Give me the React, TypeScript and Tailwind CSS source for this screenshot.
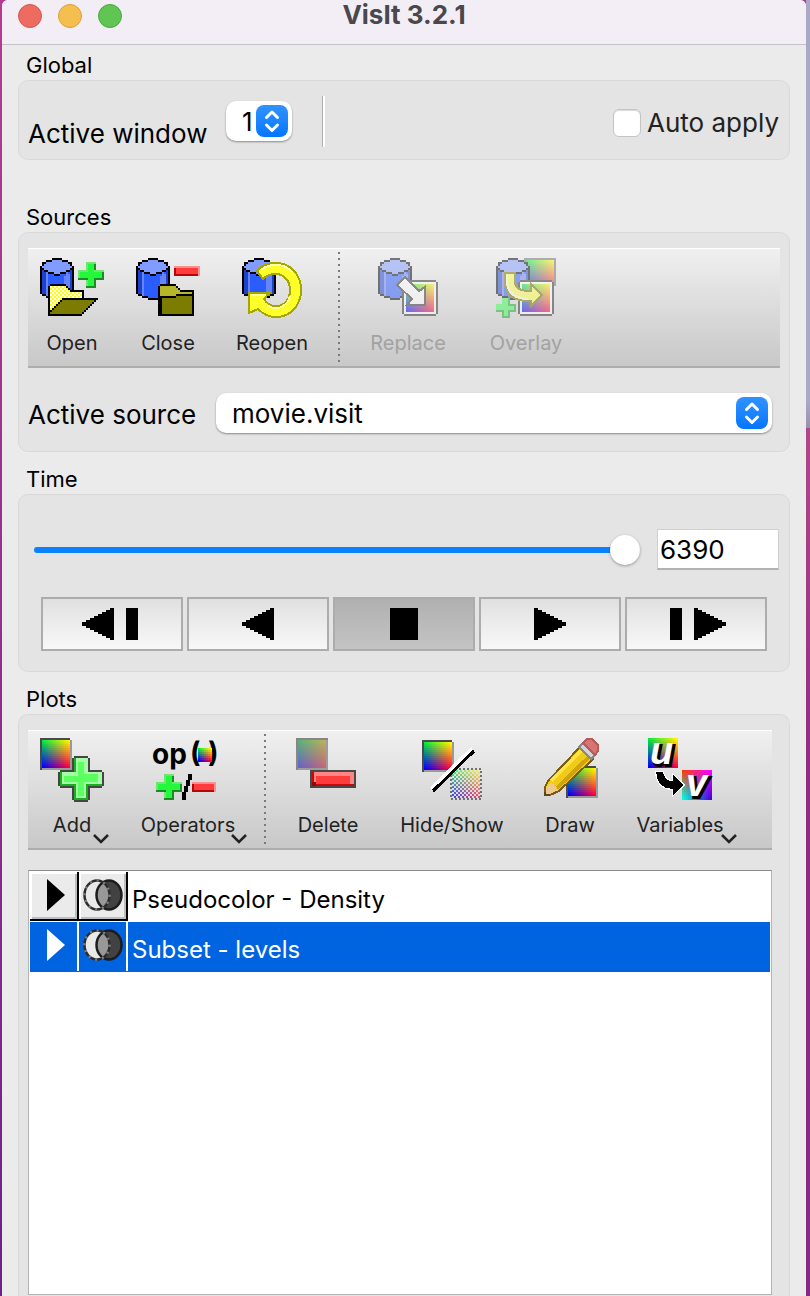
import React, { useState } from "react";
import type { ReactNode } from "react";

type RGB = [number, number, number];

const PALETTE: Record<string, string> = {
  K: "#000000",
  L: "#809cff",
  B: "#2a5cff",
  C: "#6684fb",
  D: "#1c42cc",
  O: "#7c7c00",
  T: "#b6b62a",
};

const CYLINDER = [
  "......KKKKK......",
  "...KKKLLLLLKKK...",
  ".KKLLLLLLLLLLLKK.",
  ".KLLLLLLLLLLLLLK.",
  "KLLLLLLLLLLLLLLLK",
  "KKLLLLLLLLLLLLLKK",
  "KDKKLLLLLLLLLKKDK",
  "KDDCKKKLLLKKKCBDK",
  "KDDCBBBKKKBBBCCDK",
  "KDDCBBBBBBBBCCCDK",
  "KDDCBBBBBBBBCCCDK",
  "KDDCBBBBBBBBCCCDK",
  "KDDCBBBBBBBBCCCDK",
  "KDDCBBBBBBBBCCCDK",
  "KDDCBBBBBBBBCCCDK",
  "KDDCBBBBBBBBCCCDK",
  "KDDCBBBBBBBBCCCDK",
  "KDDCBBBBBBBBCCCDK",
  ".KKCBBBBBBBBCCKK.",
  "...KKKBBBBBKKK...",
  "......KKKKK......",
];

const OPEN_FOLDER = [
  ".KKKKKKKK................",
  "KYYYYYYYYK...............",
  "KYYYYYYYYYK..............",
  "KYYYYYYYYYYKKKKKKK.......",
  "KYYYYYYYYYYYYYYYYK.......",
  "KYYYYYYYYYYYYYYYYK.......",
  "KYYYYYYYYYYYYYYYYK.......",
  "KYYYYYYKKKKKKKKKKKKKKKKKK",
  "KYYYYYKOOOOOOOOOOOOOOOOK.",
  "KYYYYKOOOOOOOOOOOOOOOOK..",
  "KYYYKOOOOOOOOOOOOOOOOK...",
  "KYYKOOOOOOOOOOOOOOOOK....",
  "KYKOOOOOOOOOOOOOOOOK.....",
  "KKOOOOOOOOOOOOOOOOK......",
  "KOOOOOOOOOOOOOOOOK.......",
  "KKKKKKKKKKKKKKKKK........",
];

const CLOSED_FOLDER = [
  ".KKKKKKKK.........",
  "KTTTTTTTTK........",
  "KTTTTTTTTTK.......",
  "KTTTTTTTTTTKKKKKKK",
  "KTTTTTTTTTTTTTTTTK",
  "KTTTTTTTTKKKKKKKKK",
  "KKKKKKKKKOOOOOOOOK",
  "KKOOOOOOOOOOOOOOOK",
  "KKOOOOOOOOOOOOOOOK",
  "KKOOOOOOOOOOOOOOOK",
  "KKOOOOOOOOOOOOOOOK",
  "KKOOOOOOOOOOOOOOOK",
  "KKOOOOOOOOOOOOOOOK",
  "KKOOOOOOOOOOOOOOOK",
  "KKOOOOOOOOOOOOOOOK",
  "KKKKKKKKKKKKKKKKKK",
];

/* Draws a sprite one cell at a time; Y cells are dithered yellow and white. */
function Sprite({ rows, x, y }: { rows: string[]; x: number; y: number }) {
  const cells: ReactNode[] = [];
  rows.forEach((row, j) => {
    row.split("").forEach((c, i) => {
      if (c === ".") return;
      const fill = c === "Y" ? ((i + j) % 2 ? "#ffff00" : "#ffffff") : PALETTE[c];
      cells.push(<rect key={`${i}-${j}`} x={x + i} y={y + j} width={1} height={1} fill={fill} />);
    });
  });
  return <g>{cells}</g>;
}

const SPECTRUM: RGB[] = [[0, 235, 60], [255, 245, 0], [0, 0, 255], [255, 0, 60]];
const MUTED: RGB[] = [[90, 178, 118], [182, 178, 92], [100, 100, 200], [196, 104, 116]];
const VIVID: RGB[] = [[255, 60, 0], [255, 0, 255], [0, 255, 220], [70, 0, 220]];

/* A square whose colour is blended between its four corners. */
function Swatch({ x, y, n, corners = SPECTRUM, dither = false }: { x: number; y: number; n: number; corners?: RGB[]; dither?: boolean }) {
  const cells: ReactNode[] = [];
  for (let j = 0; j < n; j++) {
    for (let i = 0; i < n; i++) {
      if (dither && (i + j) % 2) continue;
      const u = i / (n - 1);
      const v = j / (n - 1);
      const [a, b, c, d] = corners;
      const rgb = [0, 1, 2].map((k) =>
        Math.round((a[k] * (1 - u) + b[k] * u) * (1 - v) + (c[k] * (1 - u) + d[k] * u) * v)
      );
      cells.push(<rect key={`${i}-${j}`} x={x + i} y={y + j} width={1} height={1} fill={`rgb(${rgb.join(",")})`} />);
    }
  }
  return <g>{cells}</g>;
}

function FramedSwatch({ x, y }: { x: number; y: number }) {
  return (
    <g>
      <rect x={x + 1} y={y + 1} width={15} height={15} fill="#999999" />
      <path d={`M${x} ${y}h15v1h-14v15h-1z`} fill="#4a4a4a" />
      <Swatch x={x + 1} y={y + 1} n={14} />
    </g>
  );
}

function SmallPlus({ x, y }: { x: number; y: number }) {
  return (
    <g transform={`translate(${x} ${y})`}>
      <path d="M4 0h5v4h4v5h-4v4h-5v-4h-4v-5h4z" fill="#72e472" />
      <path d="M5 1h3v4h4v3h-4v4h-3v-4h-4v-3h4z" fill="#22f83c" />
      <path d="M8 1h1v3h-1zM12 5h1v4h-4v4h-5v-1h4v-4h4zM0 8h5v1h-5z" fill="#1e8a24" />
    </g>
  );
}

function SmallMinus({ x, y, w }: { x: number; y: number; w: number }) {
  return (
    <g transform={`translate(${x} ${y})`}>
      <rect width={w} height={5} fill="#ff9090" />
      <rect y={1} width={w - 1} height={4} fill="#b40808" />
      <rect x={1} y={1} width={w - 2} height={3} fill="#ff3c3c" />
    </g>
  );
}

function Art({ children, faded = false }: { children: ReactNode; faded?: boolean }) {
  return (
    <svg
      viewBox="0 0 32 32"
      shapeRendering="crispEdges"
      aria-hidden="true"
      className={faded ? "size-16 shrink-0 overflow-visible opacity-50" : "size-16 shrink-0 overflow-visible"}
    >
      {children}
    </svg>
  );
}

const OpenArt = () => (
  <Art>
    <Sprite rows={CYLINDER} x={0} y={1} />
    <Sprite rows={OPEN_FOLDER} x={4} y={14} />
    <SmallPlus x={19} y={3} />
  </Art>
);

const CloseArt = () => (
  <Art>
    <Sprite rows={CYLINDER} x={0} y={1} />
    <Sprite rows={CLOSED_FOLDER} x={11} y={14} />
    <SmallMinus x={19} y={5} w={13} />
  </Art>
);

const ReopenArt = () => (
  <Art>
    <Sprite rows={CYLINDER} x={1} y={1} />
    <path
      d="M8.500 7.500C11 4.500 14 3.500 18 3.500C25.500 3.500 30.500 9.500 30.500 17C30.500 25 25 30.500 18 30.500C14 30.500 11.500 29 9 26.500L4.500 28.500V18.500H14.500L12 21.500C13.500 24 15.500 25 18 25C22.500 25 25 21.500 25 17C25 12.500 22 9 18 9C15.500 9 13.500 9.500 11.500 11.500Z"
      fill="#ffff2a"
      stroke="#a6a600"
      strokeWidth={1}
    />
    <path d="M11 6.500C13 5 15 4.500 18 4.500C21 4.500 24 5.500 26 8" fill="none" stroke="#ffffa8" strokeWidth={1} />
    <path d="M14 25C18 28 24 25 25 20M5.500 19.500H13" fill="none" stroke="#ffff9c" strokeWidth={1} />
  </Art>
);

const ReplaceArt = () => (
  <Art faded>
    <Sprite rows={CYLINDER} x={1} y={1} />
    <path d="M14 12h16v1h1v16h-1v1h-16v-1h-1v-16h1z" fill="#303030" />
    <rect x={14} y={13} width={16} height={16} fill="#ffffff" />
    <Swatch x={15} y={14} n={14} />
    <path d="M14.500 10.500L21.500 17.500L24.500 15.500V24.500H15.500L18 21.500L10.500 14.500Z" fill="#ffffff" stroke="#303030" />
  </Art>
);

const OverlayArt = () => (
  <Art faded>
    <rect x={15} y={1} width={16} height={14} fill="#707070" />
    <Swatch x={16} y={2} n={14} />
    <Sprite rows={CYLINDER} x={1} y={1} />
    <path d="M13 12h16v1h1v16h-1v1h-16v-1h-1v-16h1z" fill="#303030" />
    <rect x={13} y={13} width={16} height={16} fill="#ffffff" />
    <Swatch x={14} y={14} n={14} />
    <path
      d="M5.500 8.500H10.500V13C10.500 15.500 12.500 17.500 18.500 17.500V14L24 19.500L18.500 25V22.500C10 23 5.500 19 5.500 13Z"
      fill="#ffff50"
      stroke="#707000"
    />
    <path d="M6.500 9.500V13C6.500 17.500 10 21 17 21.500" fill="none" stroke="#ffffd8" />
    <path d="M4 21h4v3h3v4h-3v3h-4v-3h-3v-4h3z" fill="#20a830" />
    <path d="M4 21h3v4h3v2h-3v3h-2v-3h-4v-3h3z" fill="#40ff58" />
  </Art>
);

const AddArt = () => (
  <Art>
    <FramedSwatch x={0} y={0} />
    <g transform="translate(9 9)">
      <path d="M8 0h7v1h1v6h6v1h1v7h-1v1h-6v6h-1v1h-7v-1h-1v-6h-6v-1h-1v-7h1v-1h6v-6h1z" fill="#454545" />
      <path d="M8 1h7v7h7v7h-7v7h-7v-7h-7v-7h7z" fill="#18b01c" />
      <path d="M9 1h6v7h7v6h-8v7h-5v-7h-7v-6h7z" fill="#a6fba6" />
      <path d="M10 3h3v6h7v4h-7v7h-3v-7h-7v-3h7z" fill="#5cff60" />
    </g>
  </Art>
);

const OperatorsArt = () => (
  <Art>
    <g fontFamily="Inter, 'Liberation Sans', sans-serif" fontWeight={700} fontSize={14} fill="#000000">
      <text x={-2} y={13}>op</text>
      <text x={17} y={12}>(</text>
      <text x={26} y={12}>)</text>
    </g>
    <Swatch x={21} y={5} n={7} />
    <SmallPlus x={0} y={18} />
    <path d="M16 18h2v3h-1v3h-1v3h-1v4h-2v-4h1v-3h1v-3h1z" fill="#000000" />
    <SmallMinus x={18} y={22} w={12} />
  </Art>
);

const DeleteArt = () => (
  <Art>
    <rect width={16} height={16} fill="#9c9c9c" />
    <path d="M0 0h16v1h-15v15h-1z" fill="#868686" />
    <Swatch x={1} y={1} n={14} corners={MUTED} />
    <rect x={7} y={16} width={23} height={9} fill="#484848" />
    <rect x={8} y={17} width={21} height={7} fill="#c80808" />
    <rect x={9} y={17} width={20} height={6} fill="#ff8484" />
    <rect x={10} y={19} width={17} height={4} fill="#ff3c3c" />
    <rect x={8} y={22} width={2} height={2} fill="#a00000" />
  </Art>
);

const HideShowArt = () => (
  <Art>
    <FramedSwatch x={1} y={1} />
    <g opacity={0.7}>
      <Swatch x={16} y={16} n={14} dither />
    </g>
    <rect x={15.500} y={15.500} width={15} height={15} fill="none" stroke="#707070" strokeDasharray="1 1" />
    <path d="M5.500 25.500L26 5.500" stroke="#ffffff" strokeWidth={2} />
    <path d="M6.500 26.500L27 6.500" stroke="#000000" strokeWidth={1.500} />
  </Art>
);

const DrawArt = () => (
  <Art>
    <FramedSwatch x={14} y={14} />
    <path d="M3.500 28.500V24.500L5 21.500L21 4.500L27.500 10.500L10.500 26.500L6 28.500Z" fill="#f0cc18" stroke="#7c5c10" />
    <path d="M6.500 21.500L22 6" stroke="#ffe448" strokeWidth={2} />
    <path d="M9.500 25L25.500 9.500" stroke="#d0a410" strokeWidth={2} />
    <path d="M4 24.500L6 22.500L8 23L8.500 25L10 26L6 28H4Z" fill="#efc890" />
    <path d="M3 27h1v1h2v1h-3z" fill="#5c4420" />
    <path d="M20.500 4.500L22.500 2.500L28.500 8.500L26.500 10.500Z" fill="#d4d4d4" stroke="#888888" />
    <path d="M22.500 2.500L24.500 .500H27L30 3.500V6.500L28.500 8.500Z" fill="#d87474" stroke="#b85a5a" />
  </Art>
);

const VariablesArt = () => (
  <Art>
    <Swatch x={0} y={0} n={15} />
    <Swatch x={17} y={16} n={15} corners={VIVID} />
    <g fontFamily="'Liberation Sans', sans-serif" fontWeight={700} fontStyle="italic" fontSize={19}>
      <text x={2} y={14} fill="#000000" stroke="#000000" strokeWidth={1}>u</text>
      <text x={1} y={13} fill="#ffffff">u</text>
      <text x={20} y={30} fill="#000000" stroke="#000000" strokeWidth={1}>v</text>
      <text x={19} y={29} fill="#ffffff">v</text>
    </g>
    <path
      d="M4 17H7.500C8 20 9.500 21.500 12.500 21.500V18.500L18 23.500L12.500 28.500V25.500C7.500 25.500 4.500 23 4 17Z"
      fill="#000000"
      stroke="#ffffff"
      strokeWidth={1}
      paintOrder="stroke"
    />
  </Art>
);

function ToolButton({ label, art, width, disabled = false, menu = false }: { label: string; art: ReactNode; width: string; disabled?: boolean; menu?: boolean }) {
  return (
    <button
      type="button"
      disabled={disabled}
      aria-haspopup={menu ? "menu" : undefined}
      className={`relative flex shrink-0 flex-col items-center gap-2 ${width}`}
    >
      {art}
      <span
        className={
          disabled
            ? "text-[20px] leading-[30px] whitespace-nowrap text-[#a2a2a2]"
            : "text-[20px] leading-[30px] whitespace-nowrap text-[#222222]"
        }
      >
        {label}
      </span>
      {menu && (
        <svg viewBox="0 0 18 11" aria-hidden="true" className="absolute right-0 -bottom-1 h-[11px] w-[18px]">
          <path d="M2 2l7 7 7-7" fill="none" stroke="#222222" strokeWidth={2.500} />
        </svg>
      )}
    </button>
  );
}

function ToolSeparator({ width }: { width: string }) {
  return (
    <div role="separator" className={`flex shrink-0 justify-center pb-[3px] ${width}`}>
      <div className="h-[110px] w-[2px] bg-[repeating-linear-gradient(#7a7a7a_0_2px,transparent_2px_6px)]" />
    </div>
  );
}

function Toolbar({ label, children }: { label: string; children: ReactNode }) {
  return (
    <div
      role="toolbar"
      aria-label={label}
      className="flex h-[120px] items-start border-t border-b-2 border-t-white border-b-[#adadad] bg-linear-to-b from-[#f0f0f0] to-[#c8c8c8]"
    >
      {children}
    </div>
  );
}

function Group({ title, className, panel, children }: { title: string; className: string; panel: string; children: ReactNode }) {
  return (
    <section className={className}>
      <h2 className="pl-2 text-[22px] leading-[30px] font-normal text-black">{title}</h2>
      <div className={`rounded-[10px] border border-[#d9d9d9] bg-[#e4e4e4] ${panel}`}>{children}</div>
    </section>
  );
}

function PopUp({ id, options, width }: { id: string; options: string[]; width: string }) {
  return (
    <div className={`relative ${width}`}>
      <select
        id={id}
        className="h-10 w-full appearance-none rounded-[10px] bg-white pt-[2px] pl-4 text-[26px] leading-[38px] text-black shadow-[0_1px_2px_rgba(0,0,0,0.4)] outline-none"
      >
        {options.map((o) => (
          <option key={o}>{o}</option>
        ))}
      </select>
      <span className="pointer-events-none absolute top-1 right-1 flex size-8 items-center justify-center rounded-lg bg-linear-to-b from-[#2f92ff] to-[#0076ff]">
        <svg viewBox="0 0 32 32" aria-hidden="true" className="size-8">
          <path d="M10.500 12.500L16 7l5.500 5.500M10.500 20L16 25.500l5.500-5.500" fill="none" stroke="#ffffff" strokeWidth={3} strokeLinecap="round" strokeLinejoin="round" />
        </svg>
      </span>
    </div>
  );
}

const LEFT_STEPS = "M32 0v32h-4v-2h-4v-2h-4v-2h-4v-2h-4v-2h-4v-2h-4v-2h-4v-4h4v-2h4v-2h4v-2h4v-2h4v-2h4v-2h4v-2z";
const RIGHT_STEPS = "M0 0v32h4v-2h4v-2h4v-2h4v-2h4v-2h4v-2h4v-2h4v-4h-4v-2h-4v-2h-4v-2h-4v-2h-4v-2h-4v-2h-4v-2z";

const TRANSPORT = [
  { label: "Step backward", d: LEFT_STEPS + "M44 0h12v32h-12z", box: "0 0 60 32", size: "h-8 w-[60px]" },
  { label: "Play backward", d: LEFT_STEPS, box: "0 0 32 32", size: "size-8" },
  { label: "Stop", d: "M2 0h28v32h-28z", box: "0 0 32 32", size: "size-8" },
  { label: "Play", d: RIGHT_STEPS, box: "0 0 32 32", size: "size-8" },
  { label: "Step forward", d: "M-24 0h12v32h-12z" + RIGHT_STEPS, box: "-28 0 60 32", size: "h-8 w-[60px]" },
];

function OverlapIcon() {
  return (
    <svg viewBox="0 0 40 32" aria-hidden="true" className="h-8 w-10 shrink-0">
      <ellipse cx="14" cy="16" rx="12.500" ry="14.500" fill="#e9e9e9" />
      <ellipse cx="26" cy="16" rx="12.500" ry="14.500" fill="#424242" />
      <path d="M20 3.200A12.500 14.500 0 0 1 20 28.800A12.500 14.500 0 0 1 20 3.200Z" fill="#989898" />
      <ellipse cx="26" cy="16" rx="12.500" ry="14.500" fill="none" stroke="#1c1c1c" strokeWidth={2.500} />
      <ellipse cx="14" cy="16" rx="12.500" ry="14.500" fill="none" stroke="#2c2c2c" strokeWidth={2.500} />
      <ellipse cx="14" cy="16" rx="12.500" ry="14.500" fill="none" stroke="#808080" strokeWidth={2.500} strokeDasharray="2 5" />
    </svg>
  );
}

function PlotRow({ name, selected, onSelect }: { name: string; selected: boolean; onSelect: () => void }) {
  const cell = selected
    ? "flex h-[49px] w-[49px] shrink-0 items-start justify-center border-r-2 border-white pt-[7px]"
    : "flex h-[49px] w-[49px] shrink-0 items-start justify-center border-r-2 border-b-2 border-black bg-[#ebebeb] pt-[7px] shadow-[inset_2px_2px_0_#ffffff,inset_-2px_-2px_0_#bdbdbd]";
  return (
    <li
      onClick={onSelect}
      className={selected ? "flex h-[50px] items-start bg-[#0064e1] text-white" : "flex h-[50px] items-start bg-white text-black"}
    >
      <button type="button" aria-label={`Expand ${name}`} className={cell}>
        <svg viewBox="0 0 18 32" aria-hidden="true" className="ml-[5px] h-8 w-[18px]">
          <path d="M0 0l18 16L0 32z" fill="currentColor" />
        </svg>
      </button>
      <button type="button" aria-label={`Selection for ${name}`} className={cell}>
        <OverlapIcon />
      </button>
      <span className="truncate pt-1 pl-1 text-[24px] leading-[48px]">{name}</span>
    </li>
  );
}

export default function App() {
  const [time, setTime] = useState("6390");
  const [selected, setSelected] = useState("Subset - levels");

  return (
    <div className="flex h-screen flex-col overflow-hidden bg-[linear-gradient(#a9a8c8_0_31%,#9a8fae_33%,#b0478c_33%,#8e2c80_60%,#842a86)] pr-1 font-[Inter,'Liberation_Sans',sans-serif]">
      <div className="flex min-h-0 flex-1 flex-col bg-linear-to-b from-[#b53c92] to-[#6e2086] pl-[2px]">
        <main className="flex min-h-0 flex-1 flex-col rounded-t-md bg-[#ebebeb]">
          <header className="relative flex h-[45px] shrink-0 items-start justify-center rounded-t-md border-b border-[#c4c2c8] bg-[#f3eef5]">
            <div className="absolute top-1 left-4 flex gap-4">
              <button type="button" aria-label="Close window" className="size-6 rounded-full border border-[#d5584e] bg-[#ed6b60]" />
              <button type="button" aria-label="Minimize window" className="size-6 rounded-full border border-[#d8a13c] bg-[#f5bf4f]" />
              <button type="button" aria-label="Zoom window" className="size-6 rounded-full border border-[#4ba73f] bg-[#61c554]" />
            </div>
            <h1 className="text-[26px] leading-[30px] font-bold text-[#4a484b]">VisIt 3.2.1</h1>
          </header>

          <div className="flex min-h-0 flex-1 flex-col px-4 pt-[5px]">
            <Group title="Global" className="shrink-0" panel="flex h-20 items-start pl-[9px] pr-[10px]">
              <label htmlFor="active-window" className="mt-[34px] w-[198px] shrink-0 text-[26px] leading-[38px] whitespace-nowrap text-black">
                Active window
              </label>
              <div className="mt-5">
                <PopUp id="active-window" options={["1"]} width="w-[66px]" />
              </div>
              <div className="mt-[15px] ml-[30px] h-[51px] w-[3px] border-l border-[#b0b0b0] bg-white" />
              <label className="mt-[23px] ml-auto flex items-center gap-[6px] text-[26px] leading-[38px] whitespace-nowrap text-[#222222]">
                <input type="checkbox" className="size-7 appearance-none rounded-md border border-[#c4c4c4] bg-white shadow-[inset_0_1px_1px_rgba(0,0,0,0.15)] checked:bg-[#0a7aff]" />
                Auto apply
              </label>
            </Group>

            <Group title="Sources" className="mt-[42px] shrink-0" panel="h-[220px] px-[9px] pt-[15px]">
              <Toolbar label="Sources">
                <div className="flex pt-[7px]">
                  <ToolButton label="Open" art={<OpenArt />} width="w-[88px]" />
                  <ToolButton label="Close" art={<CloseArt />} width="w-[104px]" />
                  <ToolButton label="Reopen" art={<ReopenArt />} width="w-[104px]" />
                </div>
                <div className="pt-[3px]">
                  <ToolSeparator width="w-[30px]" />
                </div>
                <div className="flex pt-[7px]">
                  <ToolButton label="Replace" art={<ReplaceArt />} width="w-[108px]" disabled />
                  <ToolButton label="Overlay" art={<OverlayArt />} width="w-[128px]" disabled />
                </div>
              </Toolbar>
              <div className="mt-[25px] flex items-center pr-2">
                <label htmlFor="active-source" className="w-[188px] shrink-0 pt-1 text-[26px] leading-9 whitespace-nowrap text-black">
                  Active source
                </label>
                <PopUp id="active-source" options={["movie.visit"]} width="min-w-0 flex-1" />
              </div>
            </Group>

            <Group title="Time" className="mt-3 shrink-0" panel="h-[178px] pt-[34px]">
              <div className="flex items-center pr-[10px] pl-[15px]">
                <input
                  type="range"
                  aria-label="Time"
                  min={0}
                  max={6390}
                  value={Number(time) || 0}
                  onChange={(e) => setTime(e.target.value)}
                  className="h-[30px] min-w-0 flex-1 appearance-none bg-transparent [&::-webkit-slider-runnable-track]:h-[6px] [&::-webkit-slider-runnable-track]:rounded-full [&::-webkit-slider-runnable-track]:bg-[#0a82ff] [&::-webkit-slider-thumb]:-mt-3 [&::-webkit-slider-thumb]:size-[30px] [&::-webkit-slider-thumb]:appearance-none [&::-webkit-slider-thumb]:rounded-full [&::-webkit-slider-thumb]:bg-white [&::-webkit-slider-thumb]:shadow-[0_1px_3px_rgba(0,0,0,0.35)]"
                />
                <input
                  type="text"
                  aria-label="Time value"
                  value={time}
                  onChange={(e) => setTime(e.target.value)}
                  className="ml-[17px] h-[41px] w-[122px] border border-b-2 border-[#cfcfcf] border-b-[#b2b2b2] bg-white pl-[2px] text-[26px] text-black outline-none"
                />
              </div>
              <div className="mt-[27px] flex gap-1 px-[22px]">
                {TRANSPORT.map((b) => (
                  <button
                    key={b.label}
                    type="button"
                    aria-label={b.label}
                    className={
                      b.label === "Stop"
                        ? "flex h-[54px] flex-1 items-center justify-center border-2 border-[#acacac] bg-linear-to-b from-[#b0b0b0] to-[#c4c4c4]"
                        : "flex h-[54px] flex-1 items-center justify-center border-2 border-[#acacac] bg-linear-to-b from-[#e0e0e0] to-[#f8f8f8]"
                    }
                  >
                    <svg viewBox={b.box} shapeRendering="crispEdges" aria-hidden="true" className={b.size}>
                      <path d={b.d} fill="#000000" />
                    </svg>
                  </button>
                ))}
              </div>
            </Group>

            <section className="mt-3 flex min-h-0 flex-1 flex-col">
              <h2 className="pl-2 text-[22px] leading-[30px] font-normal text-black">Plots</h2>
              <div className="flex min-h-0 flex-1 flex-col rounded-t-[10px] border border-b-0 border-[#d9d9d9] bg-[#e4e4e4] pt-[15px] pr-[17px] pl-[9px]">
                <Toolbar label="Plots">
                  <div className="flex pt-[7px] pl-[6px]">
                    <ToolButton label="Add" art={<AddArt />} width="w-[76px]" menu />
                    <div className="w-[18px]" />
                    <ToolButton label="Operators" art={<OperatorsArt />} width="w-[120px]" menu />
                  </div>
                  <div className="pt-[3px]">
                    <ToolSeparator width="w-[34px]" />
                  </div>
                  <div className="flex pt-[7px]">
                    <ToolButton label="Delete" art={<DeleteArt />} width="w-[92px]" />
                    <div className="w-3" />
                    <ToolButton label="Hide/Show" art={<HideShowArt />} width="w-[132px]" />
                    <ToolButton label="Draw" art={<DrawArt />} width="w-[104px]" />
                    <ToolButton label="Variables" art={<VariablesArt />} width="w-[116px]" menu />
                  </div>
                </Toolbar>
                <ul className="mt-5 mb-px min-h-0 flex-1 border border-[#b4b4b4] border-t-[#8c8c8c] bg-white p-px">
                  {["Pseudocolor - Density", "Subset - levels"].map((name) => (
                    <PlotRow key={name} name={name} selected={selected === name} onSelect={() => setSelected(name)} />
                  ))}
                </ul>
              </div>
            </section>
          </div>
        </main>
      </div>
    </div>
  );
}
